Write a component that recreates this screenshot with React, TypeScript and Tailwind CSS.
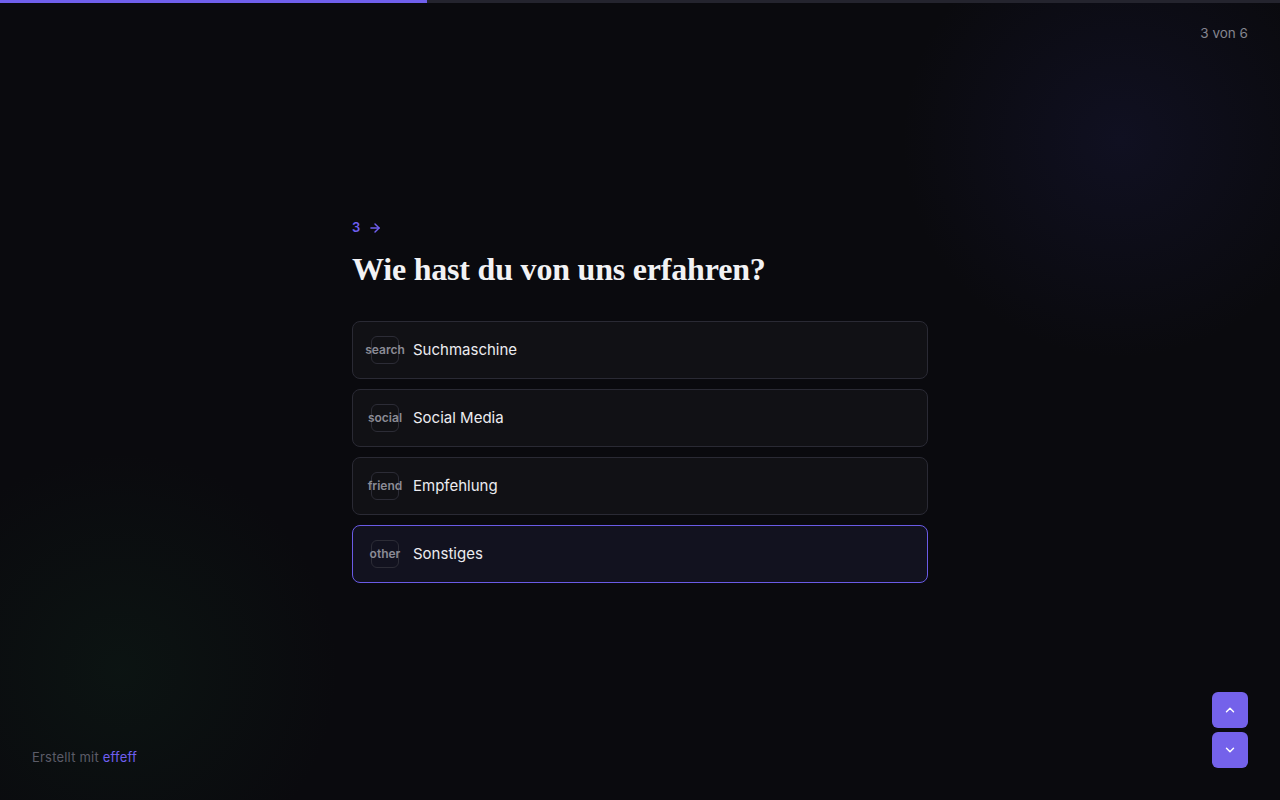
import { ArrowRight, ChevronUp, ChevronDown } from "lucide-react";

const options = [
  { key: "search", label: "Suchmaschine" },
  { key: "social", label: "Social Media" },
  { key: "friend", label: "Empfehlung" },
  { key: "other", label: "Sonstiges" },
];

const selected = "other";

export default function App() {
  return (
    <div
      className="relative flex h-[800px] w-full flex-col overflow-hidden bg-[#0a0a0e] text-white"
      style={{ fontFamily: "Inter, 'Noto Sans', sans-serif" }}
    >
      {/* ambient glows */}
      <div className="pointer-events-none absolute left-[900px] top-[-80px] h-[440px] w-[440px] rounded-full bg-[radial-gradient(circle,rgba(40,40,110,0.2)_0%,rgba(40,40,110,0)_70%)]" />
      <div className="pointer-events-none absolute left-[-100px] top-[450px] h-[440px] w-[440px] rounded-full bg-[radial-gradient(circle,rgba(20,70,40,0.16)_0%,rgba(20,70,40,0)_70%)]" />

      {/* progress */}
      <div className="relative h-[3px] w-full bg-[#24242e]">
        <div className="h-full w-1/3 bg-[#7060ec]" />
      </div>

      <div className="relative flex justify-end px-8 pt-[20px] text-[13.5px] text-[#85858f]">
        3 von 6
      </div>

      <main className="relative flex flex-1 items-center justify-center pt-[66px]">
        <div className="w-[576px]">
          <div className="flex items-center gap-[8px] text-[13px] font-semibold text-[#6f5ff0]">
            <span>3</span>
            <ArrowRight size={14} strokeWidth={2.5} />
          </div>
          <h1
            className="mt-[12px] text-[32px] font-bold leading-tight tracking-[-0.2px] text-[#f2f2f4]"
            style={{ fontFamily: "'Liberation Serif', 'DejaVu Serif', serif" }}
          >
            Wie hast du von uns erfahren?
          </h1>

          <div className="mt-[32px] flex flex-col gap-[10px]">
            {options.map((o) => {
              const active = o.key === selected;
              return (
                <div
                  key={o.key}
                  className={
                    active
                      ? "flex h-[58px] items-center gap-[14px] rounded-lg border border-[#6a5be6] bg-[#12121f] px-[18px]"
                      : "flex h-[58px] items-center gap-[14px] rounded-lg border border-[#2a2a34] bg-[#111115] px-[18px]"
                  }
                >
                  <div className="flex h-7 w-7 shrink-0 items-center justify-center rounded-md border border-[#2c2c36]">
                    <span className="text-[12px] font-semibold text-[#8b8b95]">{o.key}</span>
                  </div>
                  <span className="text-[15px] text-[#ececf0]">{o.label}</span>
                </div>
              );
            })}
          </div>
        </div>
      </main>

      <footer className="relative flex items-end justify-between px-8 pb-8">
        <div className="pb-[1px] text-[13px] tracking-[0.2px] text-[#5c5c68]">
          Erstellt mit <span className="text-[#6f5ff0]">effeff</span>
        </div>
        <div className="flex flex-col gap-1">
          <button className="flex h-9 w-9 items-center justify-center rounded-md bg-[#7462ea] text-white">
            <ChevronUp size={14} strokeWidth={2.5} />
          </button>
          <button className="flex h-9 w-9 items-center justify-center rounded-md bg-[#7462ea] text-white">
            <ChevronDown size={14} strokeWidth={2.5} />
          </button>
        </div>
      </footer>
    </div>
  );
}
